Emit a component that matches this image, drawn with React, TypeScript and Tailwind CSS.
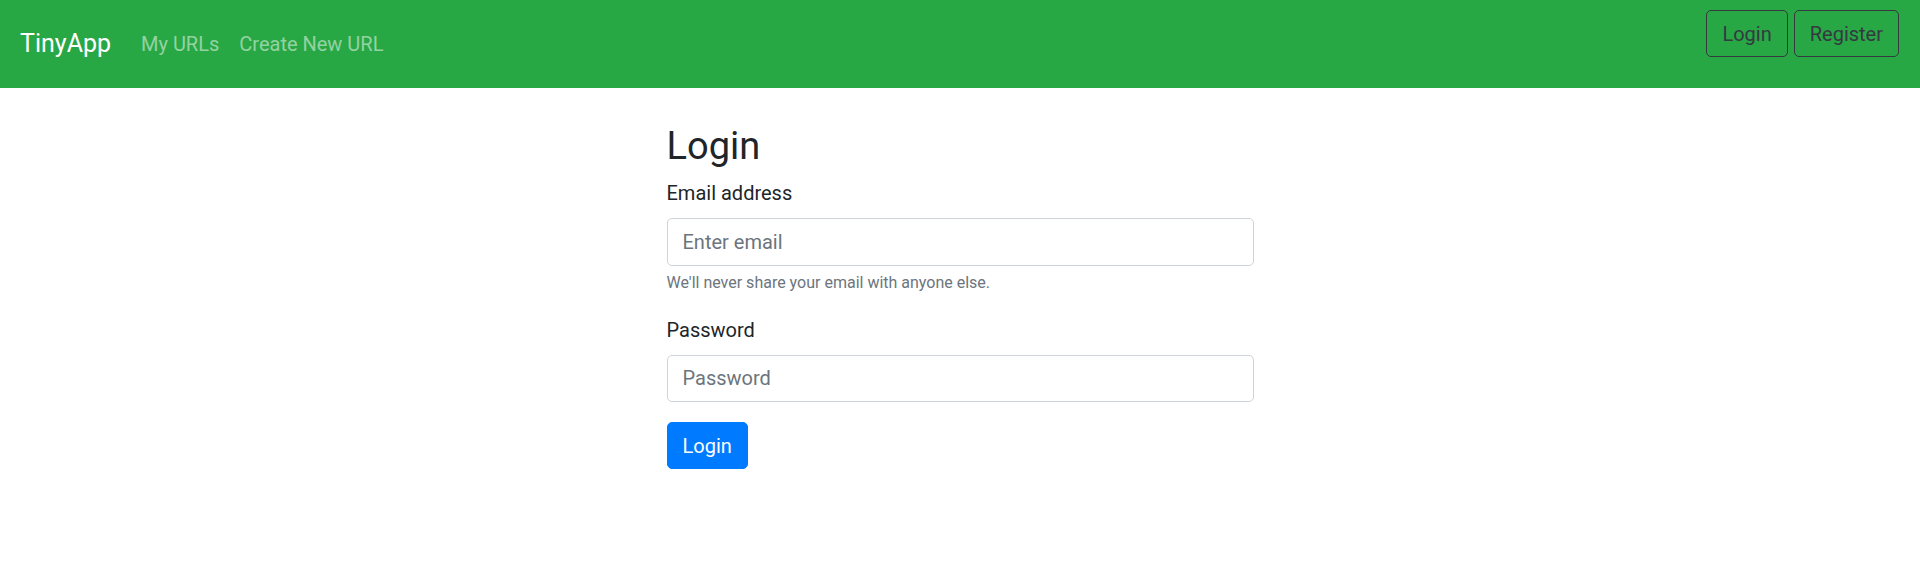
import React from "react";

const NavLink = ({ children }: { children: React.ReactNode }) => (
  <a href="#" className="px-[10px] text-[20px] leading-[30px] text-white/50 no-underline">
    {children}
  </a>
);

const OutlineButton = ({ children }: { children: React.ReactNode }) => (
  <button className="px-[15px] py-[7.5px] text-[20px] leading-[30px] border border-[#343a40] rounded-[5px] text-[#343a40] bg-transparent">
    {children}
  </button>
);

const App = () => {
  return (
    <div className="min-h-[586px] w-full bg-white [font-family:Roboto,'Helvetica_Neue',Arial,sans-serif] text-[#212529]">
      <nav className="h-[88px] bg-[#28a745] pl-[20px] pr-[21px] flex justify-between">
        <div className="flex items-center">
          <a href="#" className="text-[25px] leading-[37.5px] text-white mr-[20px]">
            TinyApp
          </a>
          <NavLink>My URLs</NavLink>
          <NavLink>Create New URL</NavLink>
        </div>
        <div className="flex items-start gap-[6px] pt-[10px]">
          <OutlineButton>Login</OutlineButton>
          <OutlineButton>Register</OutlineButton>
        </div>
      </nav>

      <main className="w-[587px] mx-auto pt-[31px]">
        <h2 className="text-[38px] leading-[48px] font-normal pt-[3px] mb-[8px]">Login</h2>
        <form onSubmit={(e) => e.preventDefault()}>
          <div className="mb-[20px]">
            <label className="block text-[20px] leading-[30px] mb-[10px]">Email address</label>
            <input
              type="email"
              placeholder="Enter email"
              className="block w-full h-[47.5px] px-[15px] text-[20px] border border-[#ced4da] rounded-[5px] bg-white placeholder:text-[#6c757d] outline-none"
            />
            <small className="block mt-[5px] text-[16px] leading-[24px] text-[#6c757d]">
              We'll never share your email with anyone else.
            </small>
          </div>
          <div className="mb-[20px]">
            <label className="block text-[20px] leading-[30px] mb-[10px]">Password</label>
            <input
              type="password"
              placeholder="Password"
              className="block w-full h-[47.5px] px-[15px] text-[20px] border border-[#ced4da] rounded-[5px] bg-white placeholder:text-[#6c757d] outline-none"
            />
          </div>
          <button
            type="submit"
            className="px-[15px] py-[7.5px] text-[20px] leading-[30px] text-white bg-[#007bff] border border-[#007bff] rounded-[5px]"
          >
            Login
          </button>
        </form>
      </main>
    </div>
  );
};

export default App;
